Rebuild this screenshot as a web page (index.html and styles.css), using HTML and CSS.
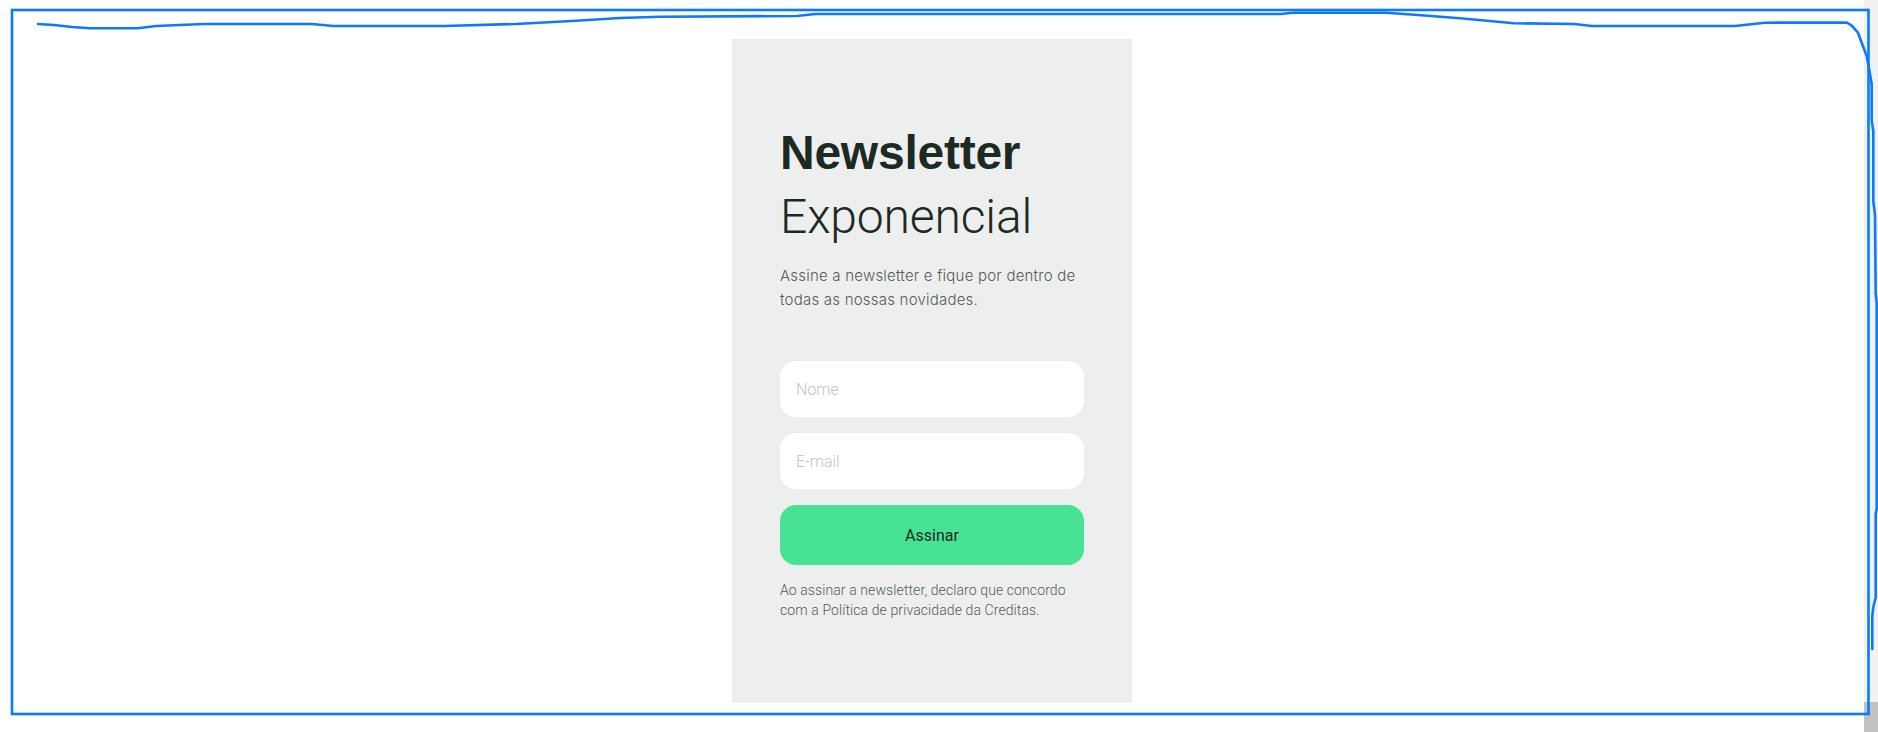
FILE: index.html
```html
<!DOCTYPE html>
<html lang="pt-BR">
<head>
<meta charset="utf-8">
<title>Newsletter Exponencial</title>
<link rel="stylesheet" href="styles.css">
</head>
<body>
<main class="page">
  <section class="panel">
    <h1 class="title"><span class="title-bold">Newsletter</span><span class="title-light">Exponencial</span></h1>
    <p class="lead">Assine a newsletter e fique por dentro de todas as nossas novidades.</p>
    <form class="form">
      <input class="field" type="text" placeholder="Nome">
      <input class="field" type="email" placeholder="E-mail">
      <button class="submit" type="button">Assinar</button>
    </form>
    <p class="disclaimer">Ao assinar a newsletter, declaro que concordo com a Política de privacidade da Creditas.</p>
  </section>
</main>
<aside class="scrollbar"><div class="thumb"></div></aside>
<svg class="annotation" viewBox="0 0 1878 732" width="1878" height="732" aria-hidden="true">
  <rect x="12" y="10" width="1856.5" height="704" fill="none" stroke="#0a7bff" stroke-width="2.6"/>
  <path fill="none" stroke="#0a7bff" stroke-width="2.6" stroke-linejoin="round" stroke-linecap="round"
    d="M38,24 L54,25 L72,27 L90,28.3 L138,28.3 L156,26 L204,24 L312,24 L333,26 L444,26 L516,24 L576,20.7 L620,18 L660,16.7 L797,16 L815,14 L1281,14 L1293,12.7 L1386,12.7 L1418,15 L1460,18.3 L1514,23.3 L1574,24 L1592,26 L1735,26 L1765,22.7 L1846.7,22.5 L1851.7,25.7 L1858,32.7 L1866.7,56 L1869.3,70 L1871.7,84 L1871.7,121 L1873.3,131 L1873.3,201 L1875,215 L1875.7,294 L1876.7,303.5 L1876.7,509 L1875.7,513.5 L1875.7,597.6 L1873.3,607 L1872.3,616 L1872.3,649"/>
</svg>
</body>
</html>
```
FILE: styles.css
```css
html, body {
  margin: 0;
  padding: 0;
  height: 100%;
  overflow: hidden;
  background: #ffffff;
}

body {
  display: flex;
  font-family: Roboto, "Liberation Sans", Arial, sans-serif;
}

.page {
  flex: 1;
  display: flex;
  justify-content: center;
  align-items: flex-start;
  padding-top: 39px;
}

.panel {
  width: 400px;
  height: 664px;
  box-sizing: border-box;
  padding: 82px 48px 0;
  background: #edefee;
  display: flex;
  flex-direction: column;
}

.title {
  margin: 0;
  font-size: 48px;
  line-height: 64px;
  color: #1d2a24;
  display: flex;
  flex-direction: column;
}

.title-bold {
  font-family: "Liberation Sans", Arial, sans-serif;
  font-weight: 700;
  letter-spacing: -0.25px;
}

.title-light {
  font-family: Roboto, sans-serif;
  font-weight: 300;
  letter-spacing: -0.15px;
}

.lead {
  margin: 15px 0 0;
  font-family: Inter, Roboto, sans-serif;
  font-size: 15px;
  line-height: 24px;
  font-weight: 300;
  letter-spacing: 0.22px;
  color: #555b58;
}

.form {
  margin-top: 49px;
  display: flex;
  flex-direction: column;
  gap: 16px;
}

.field {
  height: 56px;
  box-sizing: border-box;
  border: none;
  border-radius: 16px;
  background: #ffffff;
  padding: 0 16px;
  font-family: Roboto, sans-serif;
  font-weight: 300;
  font-size: 16px;
  color: #1d2a24;
  outline: none;
}

.field::placeholder {
  color: #bfc5c2;
}

.submit {
  height: 60px;
  border: none;
  border-radius: 16px;
  background: #48e294;
  color: #1d2a24;
  font-family: Roboto, sans-serif;
  font-weight: 400;
  font-size: 16px;
  cursor: pointer;
}

.disclaimer {
  margin: 15px 0 0;
  font-size: 14px;
  line-height: 20px;
  font-weight: 300;
  letter-spacing: 0.1px;
  color: #555b58;
}

.scrollbar {
  width: 14px;
  height: 100%;
  background: #f1f1f1;
  display: flex;
  flex-direction: column;
  justify-content: flex-end;
}

.thumb {
  height: 30px;
  background: #c1c1c1;
}

.annotation {
  position: fixed;
  left: 0;
  top: 0;
  pointer-events: none;
}
```
